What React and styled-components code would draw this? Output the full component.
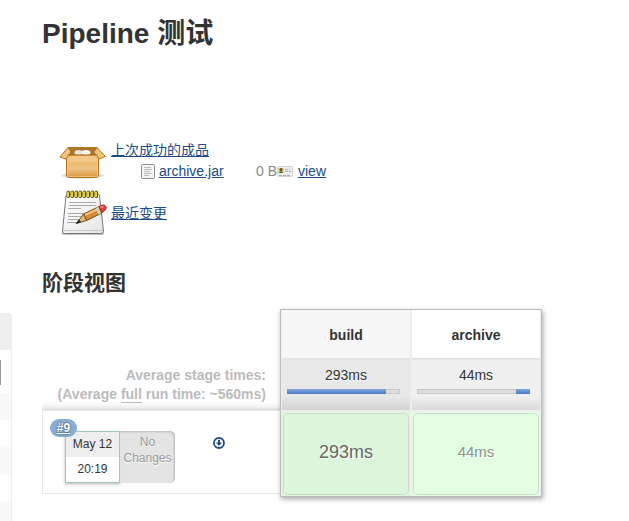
import React from "react";

import styled, { createGlobalStyle } from "styled-components";

const GlobalStyle = createGlobalStyle`
    body {
        margin: 0;
        color: #333;
        background: #fff;
        font-family: "Liberation Sans", "Noto Sans CJK SC", sans-serif;
        font-size: 14px;
        line-height: 20px;
    }

    * {
        box-sizing: border-box;
    }
`;

const Page = styled.div`
    display: flex;
    gap: 30px;
    height: 100vh;
    overflow: hidden;
`;

const HistoryPanel = styled.aside`
    flex: none;
    width: 12px;
    margin-top: 313px;
    border-right: 1px solid #eee;
    border-top-right-radius: 4px;
    overflow: hidden;
`;

const HistoryHeader = styled.div`
    height: 37px;
    background: #eee;
`;

const HistorySearch = styled.div`
    height: 43px;
    padding: 10px 0;
`;

const SearchInput = styled.input`
    display: block;
    width: 1px;
    height: 25px;
    padding: 0;
    border: 0;
    border-right: 1px solid #999;
`;

const HistoryRow = styled.div`
    height: 27px;

    &:nth-child(odd) {
        background: #f9f9f9;
    }
`;

const Main = styled.main`
    flex: 1;
    min-width: 0;
    padding-top: 16px;
`;

const Title = styled.h1`
    margin: 0 0 85px;
    font-size: 28px;
    line-height: 36px;
`;

const Subtitle = styled.h2`
    margin: 31px 0 11px;
    font-size: 21px;
    line-height: 30px;
`;

const Link = styled.a`
    color: #204a87;
    text-decoration: underline;
`;

const Summary = styled.div`
    display: flex;
    flex-direction: column;
    gap: 4px;
    padding-left: 17px;
`;

const SummaryItem = styled.div`
    display: flex;
    align-items: center;
    gap: 4px;
    height: 48px;
    line-height: 21px;
`;

const FileTable = styled.table`
    margin-left: 30px;
    border-collapse: collapse;

    td {
        padding: 0;
    }

    svg {
        display: block;
    }
`;

const FileCell = styled.td`
    width: ${props => props.width}px;
    color: #888;
    text-align: ${props => props.align || "left"};
`;

const StageView = styled.section`
    display: flex;
    align-items: flex-start;
`;

const RunColumn = styled.div`
    flex: none;
    width: 238px;
    margin-top: 50px;
`;

const AverageLabel = styled.div`
    height: 51px;
    padding: 7px 14px 0 0;
    color: #bbb;
    font-weight: bold;
    line-height: 19px;
    text-align: right;
    background: linear-gradient(rgba(0, 0, 0, 0) 84%, #f4f4f4 93%, #ddd);
`;

const Full = styled.span`
    border-bottom: 1px solid #bbb;
`;

const Run = styled.div`
    display: flex;
    align-items: flex-start;
    height: 84px;
    padding: 8px 0 0 7px;
    border: 1px solid #e8e8e8;
    border-width: 1px 0 1px 1px;
`;

const RunNumber = styled.a`
    position: relative;
    z-index: 1;
    width: 27px;
    height: 18px;
    margin-right: -12px;
    border-radius: 9px;
    color: #fff;
    background: #8aadd4;
    font-size: 12px;
    font-weight: bold;
    line-height: 18px;
    text-align: center;
    text-shadow: 0 0 2px #234;
`;

const RunBox = styled.div`
    display: flex;
    margin-top: 12px;
    font-size: 12px;
`;

const RunDate = styled.div`
    width: 55px;
    height: 52px;
    border: 1px solid #a5c9b8;
    line-height: 25px;
    text-align: center;
    box-shadow: 0 1px 3px rgba(0, 0, 0, 0.3);
`;

const Day = styled.div`
    background: #eee;
`;

const Changes = styled.div`
    width: 55px;
    height: 52px;
    padding-top: 3px;
    border-radius: 0 5px 5px 0;
    color: #999;
    background: #e4e4e4;
    line-height: 16px;
    text-align: center;
    text-shadow: 0 1px 0 #fff;
    box-shadow: inset -1px 1px 2px rgba(0, 0, 0, 0.2);
`;

const DownloadLink = styled.a`
    display: block;
    margin: 18px 0 0 38px;

    svg {
        display: block;
    }
`;

const StageTable = styled.table`
    flex: none;
    width: 262px;
    border: 1px solid #bbb;
    border-spacing: 0;
    table-layout: fixed;
    box-shadow: 1px 2px 5px rgba(0, 0, 0, 0.35);

    th,
    td {
        padding: 0;
        border: 1px solid #eee;
        border-width: 0 1px;
        text-align: center;
    }
`;

const StageName = styled.th`
    height: 50px;
    background: ${props => (props.$active ? "#f7f7f7" : "#fff")};
    box-shadow: inset 0 -2px 0 #e4e4e4;
`;

const Average = styled.td`
    height: 52px;
    vertical-align: top;
    text-shadow: 0 1px 1px #fff;
    background: linear-gradient(
        ${props => (props.$active ? "#e8e8e8, #e8e8e8" : "#f0f0f0, #f0f0f0")} 70%,
        ${props => (props.$active ? "#cfcfcf" : "#d6d6d6")}
    );
    box-shadow: inset 0 -2px 0 #eee;
`;

const AverageTime = styled.div`
    padding-top: 5px;
    line-height: 20px;
`;

const Track = styled.div`
    display: flex;
    height: 5px;
    margin: 4px 10px 0 5px;
    background: #ddd;
    box-shadow: inset 0 0 0 1px #c8c8c8;
`;

const Bar = styled.div`
    background: linear-gradient(#85a9dc, #4679c8);
`;

const StageCell = styled.td`
    height: 84px;
    background: ${props => (props.$active ? "#dcf6dc" : "#e3fee3")};
`;

const StageTime = styled.div`
    height: 82px;
    margin: 1px;
    border: 1px solid #cfdacf;
    border-radius: 5px;
    color: ${props => (props.$active ? "#666" : "#8a978a")};
    font-size: ${props => (props.$active ? 18 : 15)}px;
    line-height: 76px;
    text-shadow: 1px 1px 0 #fff;
`;

const BoxIcon = () => (
    <svg width="48" height="48" viewBox="0 0 48 48" aria-hidden="true">
        <defs>
            <linearGradient id="carton" x1="0" y1="0" x2="0" y2="1">
                <stop offset="0" stopColor="#e5ad5c" />
                <stop offset="0.6" stopColor="#efc283" />
                <stop offset="1" stopColor="#d9953d" />
            </linearGradient>
            <radialGradient id="cartonShade">
                <stop offset="0.7" stopColor="#777" stopOpacity="0.4" />
                <stop offset="1" stopColor="#777" stopOpacity="0" />
            </radialGradient>
        </defs>
        <ellipse cx="23.500" cy="38.500" rx="23" ry="3.500" fill="url(#cartonShade)" />
        <path d="M9 10.500H38L40.500 19H6.500Z" fill="#a9752c" stroke="#b8741d" />
        <ellipse cx="19.500" cy="15.500" rx="4" ry="2.500" fill="#e4e4de" />
        <ellipse cx="27" cy="15.500" rx="4.500" ry="2.500" fill="#f7f7f1" />
        <path
            d="M7.500 18.500H39.500V38Q39.500 40.500 37 40.500H10Q7.500 40.500 7.500 38Z"
            fill="url(#carton)"
            stroke="#b66d12"
        />
        <path
            d="M8.500 19.500H38.500V39.500H8.500Z"
            fill="none"
            stroke="#f9dba9"
            opacity="0.6"
        />
        <path d="M9 10.500L0.800 20L7 22L12 15Z" fill="#f0c37f" stroke="#b8741d" />
        <path d="M38 10.500L46.500 19.500L40 22L35 15Z" fill="#f0c37f" stroke="#b8741d" />
        <path d="M10 18.500H37L39 25H8Z" fill="#f2c98a" />
        <path d="M8.500 18H38.500" stroke="#b8741d" />
    </svg>
);

const NotepadIcon = () => (
    <svg width="48" height="48" viewBox="0 0 48 48" aria-hidden="true">
        <defs>
            <linearGradient id="paper" x1="0" y1="0" x2="1" y2="1">
                <stop offset="0" stopColor="#fff" />
                <stop offset="1" stopColor="#e6e6e6" />
            </linearGradient>
        </defs>
        <path d="M3 43.500Q2 46 5 46H43Q46 46 44.500 43Z" fill="#999" opacity="0.6" />
        <path
            d="M8 5.500H39.500Q40.500 5.500 40.500 7L44.500 42Q44.500 44.500 42 44.500H5.500Q3 44.500 3.500 42L7 7Z"
            fill="url(#paper)"
            stroke="#777"
        />
        <path d="M4 41.500H44" stroke="#c4c4c4" />
        <path
            d="M10 13.500H37M10 16.500H37M9 19.500H22M9 24.500H34M9 27.500H26M9 30.500H23M8 33.500H18"
            stroke="#aaa"
        />
        {[9, 13, 17, 21, 25, 29, 33, 37].map(x => (
            <g key={x}>
                <rect x={x - 1.5} y="1.500" width="3.500" height="7.500" rx="1.700" fill="#4d4910" />
                <path d={`M${x} 2.500V8`} stroke="#edd400" strokeWidth="2" />
            </g>
        ))}
        <path d="M24.500 25L40 17.500L43 24L27.500 31.500Z" fill="#d28b3d" stroke="#7d4b11" />
        <path d="M26 26L40 19.500" stroke="#f2c17c" strokeWidth="2" />
        <path d="M17.500 34.500L24.500 25L27.500 31.500Z" fill="#e2b878" stroke="#7d4b11" />
        <path d="M16.500 35L20 30.500L22 33Z" fill="#222" />
        <path d="M38 18.500L40.500 25" stroke="#ccc" strokeWidth="3" />
        <path
            d="M40 17.500L43.500 16Q46.500 15.500 47.300 18.500Q47.500 21 43 23.500Z"
            fill="#e8423b"
            stroke="#a32620"
        />
        <path d="M41.500 18.500L44.500 17.500" stroke="#f7908b" strokeWidth="1.500" />
    </svg>
);

const FileIcon = () => (
    <svg width="16" height="16" viewBox="0 0 16 16" aria-hidden="true">
        <rect x="0.500" y="0.500" width="13" height="14" rx="1" fill="#f4f4f4" stroke="#8c8c8c" />
        <path d="M3 3.500H10M3 5.500H11M3 7.500H9M3 9.500H11M3 11.500H8" stroke="#bbb" />
    </svg>
);

const CardIcon = () => (
    <svg width="16" height="16" viewBox="0 0 16 16" aria-hidden="true">
        <rect x="0.500" y="2.500" width="15" height="10" rx="1" fill="#eee" stroke="#d4d4d4" />
        <rect x="1.500" y="4" width="5" height="5" fill="#d9c97c" />
        <circle cx="4" cy="5.500" r="1.500" fill="#684a17" />
        <path d="M1.500 9Q4 5.500 6.500 9Z" fill="#4e7018" />
        <path d="M8 5.500H13M8 7.500H14M2 11.500H14" stroke="#aaa" strokeDasharray="3 1" />
    </svg>
);

const DownloadIcon = () => (
    <svg width="12" height="12" viewBox="0 0 12 12" aria-hidden="true">
        <circle cx="6" cy="6" r="5" fill="none" stroke="#204a87" strokeWidth="1.800" />
        <path d="M5 3H7V5.500H9L6 9L3 5.500H5Z" fill="#204a87" />
    </svg>
);

const stages = [
    { name: "build", time: "293ms", before: 0, share: 88, active: true },
    { name: "archive", time: "44ms", before: 88, share: 12, active: false }
];

const App = () => {
    return (
        <Page>
            <GlobalStyle />

            <HistoryPanel>
                <HistoryHeader />
                <HistorySearch>
                    <SearchInput aria-label="find" />
                </HistorySearch>
                <HistoryRow />
                <HistoryRow />
                <HistoryRow />
                <HistoryRow />
                <HistoryRow />
            </HistoryPanel>

            <Main>
                <Title>Pipeline 测试</Title>

                <Summary>
                    <SummaryItem>
                        <BoxIcon />
                        <div>
                            <Link href="#artifacts">上次成功的成品</Link>
                            <FileTable>
                                <tbody>
                                    <tr>
                                        <FileCell width={18}>
                                            <FileIcon />
                                        </FileCell>
                                        <FileCell width={65}>
                                            <Link href="#archive">archive.jar</Link>
                                        </FileCell>
                                        <FileCell width={53} align="right">
                                            0 B
                                        </FileCell>
                                        <FileCell width={21}>
                                            <CardIcon />
                                        </FileCell>
                                        <FileCell width={30}>
                                            <Link href="#view">view</Link>
                                        </FileCell>
                                    </tr>
                                </tbody>
                            </FileTable>
                        </div>
                    </SummaryItem>
                    <SummaryItem>
                        <NotepadIcon />
                        <Link href="#changes">最近变更</Link>
                    </SummaryItem>
                </Summary>

                <Subtitle>阶段视图</Subtitle>

                <StageView>
                    <RunColumn>
                        <AverageLabel>
                            <div>Average stage times:</div>
                            <div>
                                (Average <Full>full</Full> run time: ~560ms)
                            </div>
                        </AverageLabel>
                        <Run>
                            <RunNumber href="#9">#9</RunNumber>
                            <RunBox>
                                <RunDate>
                                    <Day>May 12</Day>
                                    <div>20:19</div>
                                </RunDate>
                                <Changes>
                                    No
                                    <br />
                                    Changes
                                </Changes>
                            </RunBox>
                            <DownloadLink href="#download" aria-label="Artifacts">
                                <DownloadIcon />
                            </DownloadLink>
                        </Run>
                    </RunColumn>

                    <StageTable>
                        <thead>
                            <tr>
                                {stages.map(stage => (
                                    <StageName key={stage.name} $active={stage.active}>
                                        {stage.name}
                                    </StageName>
                                ))}
                            </tr>
                        </thead>
                        <tbody>
                            <tr>
                                {stages.map(stage => (
                                    <Average key={stage.name} $active={stage.active}>
                                        <AverageTime>{stage.time}</AverageTime>
                                        <Track>
                                            <Bar
                                                style={{
                                                    marginLeft: `${stage.before}%`,
                                                    width: `${stage.share}%`
                                                }}
                                            />
                                        </Track>
                                    </Average>
                                ))}
                            </tr>
                            <tr>
                                {stages.map(stage => (
                                    <StageCell key={stage.name} $active={stage.active}>
                                        <StageTime $active={stage.active}>{stage.time}</StageTime>
                                    </StageCell>
                                ))}
                            </tr>
                        </tbody>
                    </StageTable>
                </StageView>
            </Main>
        </Page>
    );
};

export default App;
